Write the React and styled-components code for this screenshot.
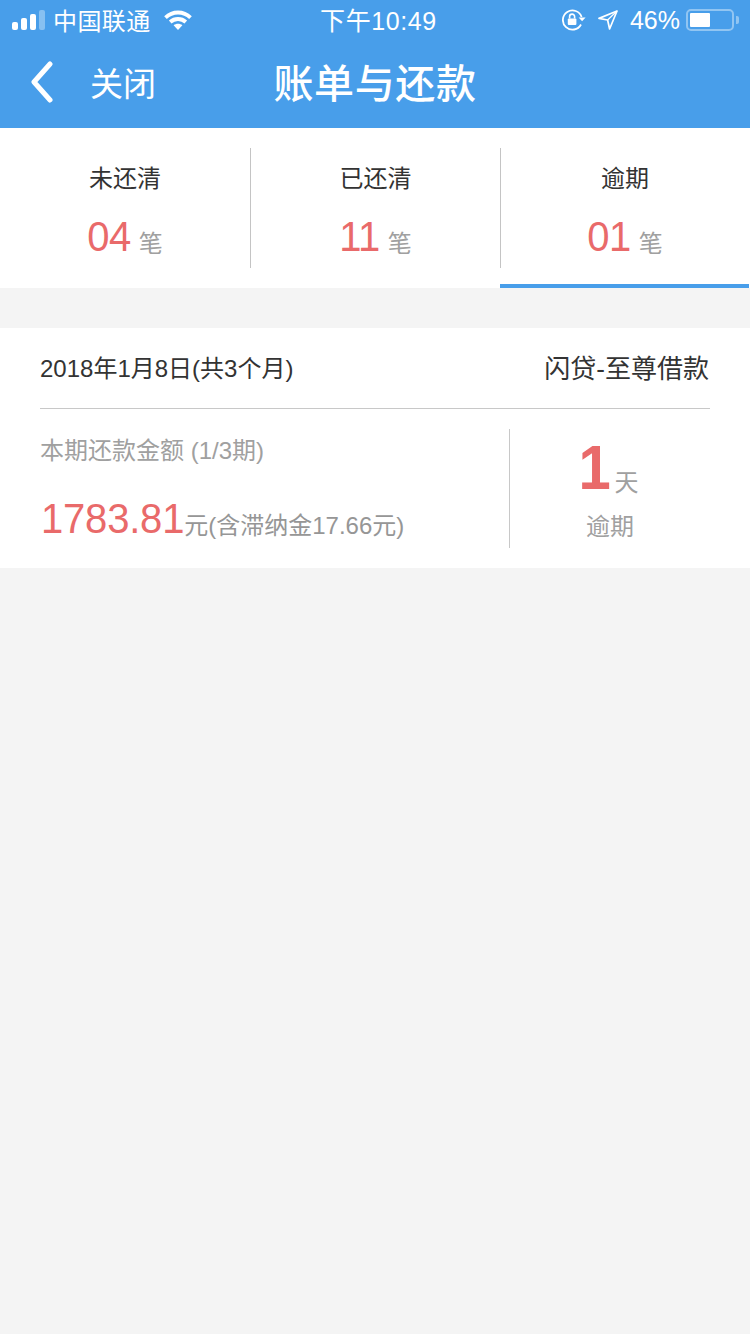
import React from 'react';
import styled, { createGlobalStyle } from 'styled-components';

const SANS = '"Liberation Sans", "Noto Sans CJK SC", sans-serif';

const GlobalStyle = createGlobalStyle`
  html, body {
    margin: 0;
    padding: 0;
    background: #f4f4f4;
    font-family: ${SANS};
  }
`;

const Page = styled.div`
  width: 750px;
  min-height: 1334px;
  background: #f4f4f4;
`;

const Head = styled.header`
  height: 128px;
  background: #489eea;
  color: #fff;
`;

const StatusBar = styled.div`
  height: 40px;
  padding: 0 11px 0 12px;
  display: grid;
  grid-template-columns: 1fr auto 1fr;
  align-items: center;
`;

const StatusSide = styled.div`
  display: flex;
  align-items: center;
  justify-content: ${p => (p.$end ? 'flex-end' : 'flex-start')};
`;

const Signal = styled.div`
  display: flex;
  align-items: flex-end;
  gap: 3px;
  margin-right: 8px;
`;

const SignalBar = styled.span`
  width: 6px;
  height: ${p => p.$h}px;
  border-radius: 2px;
  background: ${p => (p.$dim ? 'rgba(255,255,255,0.35)' : '#fff')};
`;

const Carrier = styled.span`
  font-size: 24px;
  letter-spacing: 0.4px;
  margin: -2px 13px 0 0;
`;

const Clock = styled.span`
  font-size: 25px;
  letter-spacing: 0.6px;
  padding-left: 6px;
  margin-top: -2px;
`;

const Percent = styled.span`
  font-size: 25px;
  margin: 0 6px 0 12px;
`;

const Battery = styled.div`
  width: 48px;
  height: 22px;
  box-sizing: border-box;
  border: 2px solid rgba(255,255,255,0.4);
  border-radius: 5px;
  padding: 2px;
`;

const BatteryFill = styled.div`
  width: 20px;
  height: 100%;
  background: #fff;
  border-radius: 1px;
`;

const BatteryTip = styled.div`
  width: 3px;
  height: 8px;
  margin-left: 2px;
  background: rgba(255,255,255,0.4);
  border-radius: 0 2px 2px 0;
`;

const NavBar = styled.div`
  height: 88px;
  position: relative;
  display: flex;
  align-items: center;
  justify-content: center;
`;

const BackLink = styled.div`
  position: absolute;
  left: 31px;
  top: 0;
  height: 84px;
  display: flex;
  align-items: center;
  gap: 37px;
  font-size: 33px;
`;

const Title = styled.h1`
  margin: -6px 0 0;
  font-size: 40px;
  font-weight: 500;
  letter-spacing: 0.6px;
`;

const Tabs = styled.div`
  height: 160px;
  background: #fff;
  display: flex;
`;

const Tab = styled.div`
  flex: 0 0 ${p => p.$w}px;
  position: relative;
  box-sizing: border-box;
  padding-top: 20px;
`;

const TabInner = styled.div`
  height: 120px;
  box-sizing: border-box;
  padding-top: 15px;
  text-align: center;
  border-right: 1px solid ${p => (p.$line ? '#c4c4c4' : 'transparent')};
`;

const TabLabel = styled.div`
  font-size: 24px;
  line-height: 32px;
  color: #333;
`;

const TabValue = styled.div`
  margin-top: 18px;
  display: flex;
  justify-content: center;
  align-items: baseline;
  gap: 8px;
  line-height: 50px;
`;

const Num = styled.span`
  display: inline-block;
  font-size: ${p => p.$size}px;
  font-weight: ${p => (p.$bold ? 700 : 400)};
  letter-spacing: -0.5px;
  color: #e96a6a;
  transform: scaleY(1.08);
  transform-origin: bottom;
`;

const AmountNum = styled(Num)`
  letter-spacing: -0.2px;
  margin-left: 1px;
`;

const Unit = styled.span`
  font-size: 24px;
  color: #a0a0a0;
`;

const ActiveBar = styled.div`
  position: absolute;
  left: -1px;
  right: 1px;
  bottom: 0;
  height: 4px;
  background: #489eea;
`;

const Card = styled.section`
  margin-top: 40px;
  height: 240px;
  background: #fff;
  padding: 0 40px;
  box-sizing: border-box;
`;

const CardHead = styled.div`
  height: 81px;
  box-sizing: border-box;
  padding-bottom: 4px;
  border-bottom: 1px solid #c8c8c8;
  display: flex;
  justify-content: space-between;
  align-items: center;
  color: #333;
`;

const DateText = styled.span`
  font-size: 24px;
`;

const Product = styled.span`
  font-size: 26px;
  padding-right: 1px;
`;

const CardBody = styled.div`
  display: flex;
  padding-top: 20px;
`;

const Amount = styled.div`
  width: 470px;
  height: 119px;
  box-sizing: border-box;
  border-right: 1px solid #c8c8c8;
`;

const AmountLabel = styled.div`
  font-size: 24px;
  line-height: 44px;
  color: #a0a0a0;
`;

const AmountValue = styled.div`
  margin-top: 22px;
  display: flex;
  align-items: baseline;
  line-height: 50px;
`;

const AmountNote = styled.span`
  font-size: 24px;
  color: #969696;
`;

const Overdue = styled.div`
  flex: 1;
  text-align: center;
`;

const DayRow = styled.div`
  display: flex;
  justify-content: center;
  align-items: baseline;
  gap: 4px;
  padding: 2px 3px 0 0;
  line-height: 80px;
  height: 62px;
`;

const OverdueLabel = styled.div`
  margin-top: 18px;
  font-size: 24px;
  line-height: 32px;
  color: #a0a0a0;
`;

const WifiIcon = () => (
  <svg width="28" height="20" viewBox="0 0 28 20" fill="none" stroke="#fff" strokeWidth="3.8">
    <path d="M1.5 7.6C8.5 .8 19.5 .8 26.5 7.6" />
    <path d="M6.2 12c4.4-4 11.2-4 15.6 0" />
    <path d="M14 20l-4.4-4.8c2.6-2 6.2-2 8.8 0z" fill="#fff" stroke="none" />
  </svg>
);

const LockIcon = () => (
  <svg width="24" height="22" viewBox="0 0 24 22" fill="none" style={{ marginRight: 12 }}>
    <path d="M19 15.5A9.6 9.6 0 1 1 19.6 8" stroke="#fff" strokeWidth="1.8" />
    <path d="M16.6 8.6h7l-3.5 3.6z" fill="#fff" />
    <rect x="5.8" y="9.4" width="8.6" height="6.6" rx="1" fill="#fff" />
    <path d="M7.6 9.6V7.6a2.5 2.5 0 0 1 5 0v2" stroke="#fff" strokeWidth="1.6" />
  </svg>
);

const ArrowIcon = () => (
  <svg width="20" height="20" viewBox="0 0 20 20" fill="none">
    <path d="M19 1L1 8.4l8.6 1.6 2 9z" stroke="#fff" strokeWidth="1.7" strokeLinejoin="round" />
    <path d="M19 1L9.6 10" stroke="#fff" strokeWidth="1.2" />
  </svg>
);

const BackIcon = () => (
  <svg width="22" height="42" viewBox="0 0 22 42" fill="none">
    <path d="M19 3L3 21l16 18" stroke="#fff" strokeWidth="5" strokeLinecap="round" strokeLinejoin="round" />
  </svg>
);

const tabs = [
  { label: '未还清', num: '04', w: 251, line: true },
  { label: '已还清', num: '11', w: 250, line: true },
  { label: '逾期', num: '01', w: 249, active: true },
];

export default function App() {
  return (
    <Page>
      <GlobalStyle />
      <Head>
        <StatusBar>
          <StatusSide>
            <Signal>
              <SignalBar $h={8} />
              <SignalBar $h={12} />
              <SignalBar $h={16} />
              <SignalBar $h={20} $dim />
            </Signal>
            <Carrier>中国联通</Carrier>
            <WifiIcon />
          </StatusSide>
          <Clock>下午10:49</Clock>
          <StatusSide $end>
            <LockIcon />
            <ArrowIcon />
            <Percent>46%</Percent>
            <Battery><BatteryFill /></Battery>
            <BatteryTip />
          </StatusSide>
        </StatusBar>
        <NavBar>
          <BackLink>
            <BackIcon />
            <span>关闭</span>
          </BackLink>
          <Title>账单与还款</Title>
        </NavBar>
      </Head>

      <Tabs>
        {tabs.map(t => (
          <Tab key={t.label} $w={t.w}>
            <TabInner $line={t.line}>
              <TabLabel>{t.label}</TabLabel>
              <TabValue>
                <Num $size={40}>{t.num}</Num>
                <Unit>笔</Unit>
              </TabValue>
            </TabInner>
            {t.active && <ActiveBar />}
          </Tab>
        ))}
      </Tabs>

      <Card>
        <CardHead>
          <DateText>2018年1月8日(共3个月)</DateText>
          <Product>闪贷-至尊借款</Product>
        </CardHead>
        <CardBody>
          <Amount>
            <AmountLabel>本期还款金额 (1/3期)</AmountLabel>
            <AmountValue>
              <AmountNum $size={40}>1783.81</AmountNum>
              <AmountNote>元(含滞纳金17.66元)</AmountNote>
            </AmountValue>
          </Amount>
          <Overdue>
            <DayRow>
              <Num $size={58} $bold>1</Num>
              <Unit>天</Unit>
            </DayRow>
            <OverdueLabel>逾期</OverdueLabel>
          </Overdue>
        </CardBody>
      </Card>
    </Page>
  );
}
